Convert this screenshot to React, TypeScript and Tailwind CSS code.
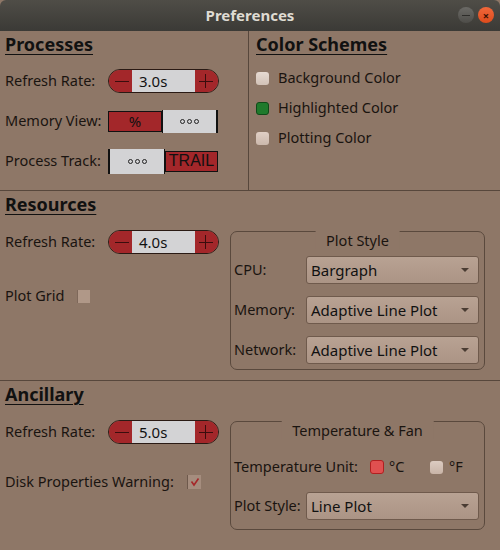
import React from "react";

const FONT = { fontFamily: '"Noto Sans", "Open Sans", sans-serif' } as React.CSSProperties;

function Dots() {
  return (
    <div className="flex gap-[2px] items-center">
      <span className="w-[5px] h-[5px] rounded-full border border-[#222]" />
      <span className="w-[5px] h-[5px] rounded-full border border-[#222]" />
      <span className="w-[5px] h-[5px] rounded-full border border-[#222]" />
    </div>
  );
}

function Spin({ value }: { value: string }) {
  return (
    <div className="flex h-[24px] w-[111px] rounded-full border border-[#2a1a14] overflow-hidden">
      <div className="w-[23px] bg-[#a3272a] flex items-center justify-center">
        <span className="w-[14px] h-[1px] bg-[#3a0d0d] ml-[2px]" />
      </div>
      <div className="flex-1 bg-[#d3d3d5] flex items-center pl-[7px] text-[15px] text-[#111]">{value}</div>
      <div className="w-[23px] bg-[#a3272a] flex items-center justify-center relative">
        <span className="w-[14px] h-[1px] bg-[#3a0d0d] mr-[2px]" />
        <span className="absolute w-[1px] h-[14px] bg-[#3a0d0d] left-[10px]" />
      </div>
    </div>
  );
}

function Combo({ text }: { text: string }) {
  return (
    <div className="h-[28px] w-[173px] rounded-[3px] border border-[#6f5a4c] bg-gradient-to-b from-[#b8a293] to-[#ab9485] flex items-center justify-between pl-[4px] pr-[9px] text-[15px] text-[#111]">
      <span>{text}</span>
      <span className="w-0 h-0 border-l-[4px] border-r-[4px] border-t-[4px] border-l-transparent border-r-transparent border-t-[#4a3c33]" />
    </div>
  );
}

function Check({ cls }: { cls: string }) {
  return <span className={"inline-block w-[13px] h-[13px] rounded-[3px] " + cls} />;
}

function Header({ text }: { text: string }) {
  return <div className="text-[18px] font-bold underline underline-offset-[3px] decoration-[1px] text-[#111] leading-[20px]">{text}</div>;
}

export default function App() {
  return (
    <div style={FONT} className="w-[500px] h-[550px] bg-[#8e7767] text-[#1a1410] text-[14.5px] flex flex-col overflow-hidden">
      {/* title bar */}
      <div className="h-[31px] shrink-0 bg-gradient-to-b from-[#4f4d47] to-[#3b3a36] flex items-center relative rounded-t-[6px]">
        <div className="flex-1 text-center text-[15px] font-bold text-[#dfdbd2]">Preferences</div>
        <div className="absolute right-[6px] top-[7px] flex gap-[4px]">
          <span className="w-[16px] h-[16px] rounded-full bg-gradient-to-b from-[#6b6a66] to-[#4e4d49] flex items-center justify-center">
            <span className="w-[8px] h-[1px] bg-[#2e2d2a]" />
          </span>
          <span className="w-[16px] h-[16px] rounded-full bg-gradient-to-b from-[#f0673a] to-[#dd4b1b] flex items-center justify-center text-[#3a1205] text-[11px] leading-none font-bold">×</span>
        </div>
      </div>

      {/* section 1 */}
      <div className="h-[160px] shrink-0 flex border-b border-[#57473c]">
        <div className="w-[249px] border-r border-[#57473c] pl-[5px] pt-[3px]">
          <Header text="Processes" />
          <div className="h-[40px] mt-[7px] flex items-center">
            <span className="w-[103px]">Refresh Rate:</span>
            <Spin value="3.0s" />
          </div>
          <div className="h-[40px] flex items-center">
            <span className="w-[103px]">Memory View:</span>
            <div className="flex items-center">
              <div className="w-[54px] h-[21px] bg-[#a3272a] border border-[#111] flex items-center justify-center text-[15px] text-[#111]">%</div>
              <div className="w-[56px] h-[23px] bg-[#d3d3d5] border-l border-r-2 border-[#111] flex items-center justify-center"><Dots /></div>
            </div>
          </div>
          <div className="h-[40px] flex items-center">
            <span className="w-[103px]">Process Track:</span>
            <div className="flex items-center">
              <div className="w-[57px] h-[25px] bg-[#d3d3d5] border-l-2 border-r border-[#111] flex items-center justify-center"><Dots /></div>
              <div className="w-[53px] h-[21px] bg-[#a3272a] border border-[#111] flex items-center justify-center text-[16px] text-[#111] leading-none" style={{ fontFamily: '"Liberation Sans", sans-serif' }}>TRAIL</div>
            </div>
          </div>
        </div>
        <div className="flex-1 pl-[7px] pt-[3px]">
          <Header text="Color Schemes" />
          <div className="flex flex-col mt-[9px]">
            <div className="h-[30px] flex items-center gap-[9px]"><Check cls="bg-gradient-to-b from-[#e6dad2] to-[#d2c2b7]" /><span>Background Color</span></div>
            <div className="h-[30px] flex items-center gap-[9px]"><Check cls="bg-[#1f7a2c] border border-[#0f4a18]" /><span>Highlighted Color</span></div>
            <div className="h-[30px] flex items-center gap-[9px]"><Check cls="bg-gradient-to-b from-[#e0cfc5] to-[#cbb8ac]" /><span>Plotting Color</span></div>
          </div>
        </div>
      </div>

      {/* section 2 */}
      <div className="h-[190px] shrink-0 flex border-b border-[#57473c]">
        <div className="w-[230px] pl-[5px] pt-[3px]">
          <Header text="Resources" />
          <div className="h-[40px] mt-[8px] flex items-center">
            <span className="w-[103px]">Refresh Rate:</span>
            <Spin value="4.0s" />
          </div>
          <div className="h-[30px] mt-[19px] flex items-center">
            <span className="w-[72px]">Plot Grid</span>
            <span className="w-[13px] h-[13px] bg-[#b09888] border-l border-[#7e685a]" />
          </div>
        </div>
        <div className="flex-1 pt-[40px] pr-[15px]">
          <div className="relative border border-[#5a493d] rounded-[7px] h-[139px] pl-[3px] pr-[5px] pt-[24px]">
            <div className="absolute top-[-1px] left-1/2 -translate-x-1/2 bg-[#8e7767] px-[11px] h-[18px] flex items-center leading-none">Plot Style</div>
            <div className="flex flex-col gap-[12px]">
              <div className="flex items-center justify-between"><span>CPU:</span><Combo text="Bargraph" /></div>
              <div className="flex items-center justify-between"><span>Memory:</span><Combo text="Adaptive Line Plot" /></div>
              <div className="flex items-center justify-between"><span>Network:</span><Combo text="Adaptive Line Plot" /></div>
            </div>
          </div>
        </div>
      </div>

      {/* section 3 */}
      <div className="flex-1 flex">
        <div className="w-[230px] pl-[5px] pt-[3px]">
          <Header text="Ancillary" />
          <div className="h-[40px] mt-[8px] flex items-center">
            <span className="w-[103px]">Refresh Rate:</span>
            <Spin value="5.0s" />
          </div>
          <div className="h-[30px] mt-[15px] flex items-center">
            <span className="w-[182px]">Disk Properties Warning:</span>
            <span className="w-[14px] h-[14px] bg-[#a58d7e] border-l border-[#6e594c] flex items-center justify-center">
              <svg width="10" height="10" viewBox="0 0 10 10"><path d="M1.5 4.5 L4 8 L8.5 1.5" stroke="#a5282a" strokeWidth="1.6" fill="none" /></svg>
            </span>
          </div>
        </div>
        <div className="flex-1 pt-[40px] pr-[15px]">
          <div className="relative border border-[#5a493d] rounded-[7px] h-[109px] pl-[3px] pr-[5px] pt-[30px]">
            <div className="absolute top-[-1px] left-1/2 -translate-x-1/2 bg-[#8e7767] px-[11px] h-[18px] flex items-center leading-none whitespace-nowrap">Temperature &amp; Fan</div>
            <div className="h-[30px] flex items-center">
              <span className="w-[136px]">Temperature Unit:</span>
              <Check cls="w-[14px] h-[14px] bg-[#e05050] border border-[#b02020]" />
              <span className="ml-[5px] w-[41px]">°C</span>
              <Check cls="bg-gradient-to-b from-[#dccbc1] to-[#c8b4a7]" />
              <span className="ml-[6px]">°F</span>
            </div>
            <div className="flex items-center justify-between mt-[10px]"><span>Plot Style:</span><Combo text="Line Plot" /></div>
          </div>
        </div>
      </div>
    </div>
  );
}
